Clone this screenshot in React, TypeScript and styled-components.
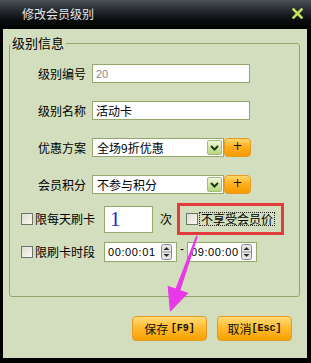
import React from 'react';
import styled, { createGlobalStyle } from 'styled-components';

const GlobalStyle = createGlobalStyle`
  html, body {
    margin: 0;
    padding: 0;
    background: #000;
  }
  body {
    font-family: 'Noto Sans CJK SC', 'Noto Sans', sans-serif;
    font-size: 12px;
    color: #000;
  }
`;

// Dialog for editing a member level
const App = () => (
  <>
    <GlobalStyle />
    <Window>
      <TitleBar>
        <Title>修改会员级别</Title>
        <CloseIcon width="11" height="11" viewBox="0 0 11 11">
          <path d="M1.5 1.5 L9.5 9.5 M9.5 1.5 L1.5 9.5" stroke="#c0e060" strokeWidth="2.6" strokeLinecap="square" />
        </CloseIcon>
      </TitleBar>

      <Body>
        <Group>
          <Legend>级别信息</Legend>

          <FormRow>
            <Label>级别编号</Label>
            <TextBox $muted>20</TextBox>
          </FormRow>
          <FormRow>
            <Label>级别名称</Label>
            <TextBox>活动卡</TextBox>
          </FormRow>
          <FormRow>
            <Label>优惠方案</Label>
            <Select>
              <SelectText>全场9折优惠</SelectText>
              <DropButton>
                <svg width="9" height="6" viewBox="0 0 9 6">
                  <path d="M1 1 L4.5 4.5 L8 1" stroke="#1e3a10" strokeWidth="2" fill="none" />
                </svg>
              </DropButton>
            </Select>
            <PlusButton>+</PlusButton>
          </FormRow>
          <FormRow>
            <Label>会员积分</Label>
            <Select>
              <SelectText>不参与积分</SelectText>
              <DropButton>
                <svg width="9" height="6" viewBox="0 0 9 6">
                  <path d="M1 1 L4.5 4.5 L8 1" stroke="#1e3a10" strokeWidth="2" fill="none" />
                </svg>
              </DropButton>
            </Select>
            <PlusButton>+</PlusButton>
          </FormRow>

          <CheckRow $height={32}>
            <CheckBox />
            <CheckLabel>限每天刷卡</CheckLabel>
            <CountBox>1</CountBox>
            <Unit>次</Unit>
            <Highlight>
              <CheckBox />
              <FocusLabel>不享受会员价</FocusLabel>
            </Highlight>
          </CheckRow>
          <CheckRow $height={34}>
            <CheckBox />
            <CheckLabel>限刷卡时段</CheckLabel>
            <TimeBox $width={73} $first>
              <TimeText>00:00:01</TimeText>
              <Spinner />
            </TimeBox>
            <Dash>-</Dash>
            <TimeBox $width={70}>
              <TimeText>09:00:00</TimeText>
              <Spinner />
            </TimeBox>
          </CheckRow>
        </Group>

        <ButtonRow>
          <ActionButton>
            保存 <Key>[F9]</Key>
          </ActionButton>
          <ActionButton>
            取消<Key>[Esc]</Key>
          </ActionButton>
        </ButtonRow>
      </Body>

      {/* annotation arrow drawn over the dialog */}
      <Arrow width="311" height="363" viewBox="0 0 311 363">
        <polygon
          points="196.1,235.7 197.9,236.3 180.4,290.2 188.4,293.1 170,312 167.6,285.7 175.6,288.6"
          fill="#e838e8"
        />
      </Arrow>
    </Window>
  </>
);

export default App;

const Spinner = () => (
  <SpinBox>
    <svg width="11" height="16" viewBox="0 0 11 16">
      <rect x="0.5" y="0.5" width="10" height="15" rx="2" fill="#e4e4e4" stroke="#8c8c8c" />
      <line x1="1" y1="8" x2="10" y2="8" stroke="#9a9a9a" />
      <path d="M2.5 6 L5.5 3 L8.5 6 Z" fill="#303030" />
      <path d="M2.5 10 L5.5 13 L8.5 10 Z" fill="#303030" />
    </svg>
  </SpinBox>
);

const Window = styled.div`
  position: relative;
  width: 311px;
  height: 363px;
  display: flex;
  flex-direction: column;
  background: #000;
  overflow: hidden;
`;

const TitleBar = styled.div`
  height: 29px;
  display: flex;
  align-items: center;
  justify-content: space-between;
  padding: 0 8px 0 22px;
  box-sizing: border-box;
  background: linear-gradient(to bottom, #4a5158 0%, #262b30 35%, #0a0c0e 70%, #000 100%);
`;

const Title = styled.span`
  color: #e6e6e6;
  font-size: 12px;
  line-height: 14px;
  margin-top: -1px;
`;

const CloseIcon = styled.svg`
  display: block;
  margin-top: -2px;
`;

const Body = styled.div`
  flex: 1;
  margin: 0 4px 5px 3px;
  padding: 6px 7px 0 6px;
  background: #d2debd;
  display: flex;
  flex-direction: column;
`;

const Group = styled.fieldset`
  margin: 0;
  padding: 4px 0 27px 0;
  min-width: 0;
  border: 1px solid #8fa76a;
  border-radius: 3px;
`;

const Legend = styled.legend`
  padding: 0 2px;
  font-size: 13px;
  line-height: 16px;
`;

const FormRow = styled.div`
  height: 37px;
  display: flex;
  align-items: center;
  padding-left: 28px;
`;

const Label = styled.span`
  width: 48px;
  margin-right: 6px;
  font-size: 12px;
  line-height: 14px;
  white-space: nowrap;
`;

const TextBox = styled.div<{ $muted?: boolean }>`
  box-sizing: border-box;
  width: 158px;
  height: 19px;
  padding: 0 3px;
  display: flex;
  align-items: center;
  background: #fff;
  border: 1px solid #94a86e;
  color: ${({ $muted }) => ($muted ? '#8a8a8a' : '#000')};
  font-family: ${({ $muted }) => ($muted ? "'Liberation Sans', sans-serif" : "'Noto Sans CJK SC', sans-serif")};
  font-size: ${({ $muted }) => ($muted ? '11px' : '12px')};
`;

const Select = styled.div`
  box-sizing: border-box;
  width: 132px;
  height: 19px;
  display: flex;
  align-items: center;
  justify-content: space-between;
  background: #fff;
  border: 1px solid #94a86e;
  padding: 1px 1px 1px 4px;
`;

const SelectText = styled.span`
  font-size: 12px;
  line-height: 14px;
  white-space: nowrap;
`;

const DropButton = styled.span`
  box-sizing: border-box;
  width: 15px;
  height: 15px;
  display: flex;
  align-items: center;
  justify-content: center;
  background: linear-gradient(to bottom, #f0f8d8, #b6d67c);
  border: 1px solid #a4bc78;
  border-radius: 2px;
`;

const PlusButton = styled.span`
  box-sizing: border-box;
  width: 27px;
  height: 19px;
  margin-top: -1px;
  display: flex;
  align-items: center;
  justify-content: center;
  padding-bottom: 3px;
  font-family: 'DejaVu Sans', sans-serif;
  font-size: 12px;
  color: #111;
  background: linear-gradient(to bottom, #ffd868 0%, #ffb020 45%, #f59a00 100%);
  border: 1px solid #e89a20;
  border-radius: 4px;
`;

const CheckRow = styled.div<{ $height: number }>`
  height: ${({ $height }) => $height}px;
  display: flex;
  align-items: center;
  padding-left: 11px;
`;

const CheckBox = styled.span`
  box-sizing: border-box;
  width: 12px;
  height: 12px;
  flex-shrink: 0;
  border: 1px solid #6e7468;
  background: linear-gradient(135deg, #dcdcd0, #fbfbf6);
`;

const CheckLabel = styled.span`
  margin-left: 2px;
  width: 60px;
  font-size: 12px;
  line-height: 14px;
  white-space: nowrap;
`;

const CountBox = styled.div`
  box-sizing: border-box;
  margin-left: 9px;
  width: 49px;
  height: 27px;
  padding-left: 5px;
  display: flex;
  align-items: center;
  background: #fff;
  border: 1px solid #94a86e;
  color: #1c28c8;
  font-family: 'Liberation Serif', serif;
  font-size: 21px;
`;

const Unit = styled.span`
  margin-left: 7px;
  font-size: 12px;
  line-height: 14px;
`;

const Highlight = styled.div`
  box-sizing: border-box;
  margin-left: 5px;
  width: 107px;
  height: 32px;
  display: flex;
  align-items: center;
  padding-left: 6px;
  border: 3px solid #e23c3c;
`;

const FocusLabel = styled.span`
  margin-left: 1px;
  padding: 0 1px;
  font-size: 12px;
  line-height: 12px;
  border: 1px dotted #222;
  white-space: nowrap;
`;

const TimeBox = styled.div<{ $width: number; $first?: boolean }>`
  box-sizing: border-box;
  width: ${({ $width }) => $width}px;
  height: 20px;
  margin-left: ${({ $first }) => ($first ? '9px' : '0')};
  display: flex;
  align-items: center;
  justify-content: space-between;
  padding: 0 4px 0 3px;
  background: #fff;
  border: 1px solid #94a86e;
`;

const TimeText = styled.span`
  font-family: 'Liberation Sans', sans-serif;
  font-size: 11px;
  letter-spacing: 0.6px;
  white-space: nowrap;
`;

const SpinBox = styled.span`
  display: flex;
`;

const Dash = styled.span`
  width: 10px;
  text-align: center;
  font-family: 'Liberation Sans', sans-serif;
  font-size: 12px;
  margin-top: -6px;
`;

const ButtonRow = styled.div`
  display: flex;
  justify-content: flex-end;
  gap: 10px;
  margin-top: 19px;
  padding-right: 8px;
`;

const ActionButton = styled.div`
  box-sizing: border-box;
  width: 75px;
  height: 25px;
  display: flex;
  align-items: center;
  justify-content: center;
  font-size: 12px;
  color: #111;
  white-space: pre;
  background: linear-gradient(to bottom, #ffdc78 0%, #ffbc30 45%, #f8a000 100%);
  border: 1px solid #e59a28;
  border-radius: 4px;
`;

const Key = styled.span`
  font-family: 'Liberation Mono', monospace;
  font-weight: bold;
  font-size: 10px;
`;

const Arrow = styled.svg`
  position: absolute;
  left: 0;
  top: 0;
  pointer-events: none;
`;
